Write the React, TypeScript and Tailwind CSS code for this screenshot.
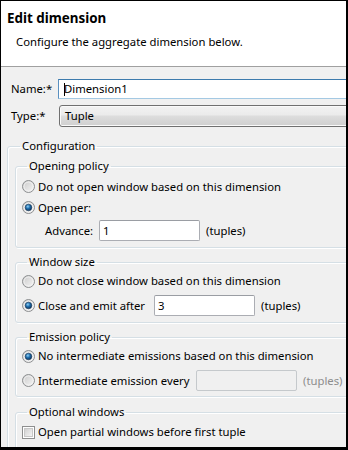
import React from "react";

function Radio({ checked }: { checked?: boolean }) {
  return (
    <svg width="13" height="13" viewBox="0 0 13 13" className="shrink-0">
      <defs>
        <linearGradient id="rbg" x1="0" y1="0" x2="1" y2="1">
          <stop offset="0" stopColor="#c9c9c9" />
          <stop offset="1" stopColor="#f7f7f7" />
        </linearGradient>
        <radialGradient id="rdot" cx="0.4" cy="0.35" r="0.7">
          <stop offset="0" stopColor="#8fd0f6" />
          <stop offset="0.45" stopColor="#1f6fae" />
          <stop offset="1" stopColor="#0b2d52" />
        </radialGradient>
      </defs>
      <circle cx="6.5" cy="6.5" r="6" fill="url(#rbg)" stroke="#8d8f91" />
      <circle cx="6.5" cy="6.5" r="4.5" fill="none" stroke="#f4f4f4" strokeWidth="0.8" />
      {checked && <circle cx="6.5" cy="6.5" r="3.3" fill="url(#rdot)" stroke="#1c3b5a" strokeWidth="0.6" />}
    </svg>
  );
}

function Checkbox() {
  return (
    <div className="w-[13px] h-[13px] shrink-0 border border-[#8e8f8f] bg-white p-[1px]">
      <div className="w-full h-full border border-[#c8c8c8] bg-gradient-to-br from-[#d2d2d2] to-[#f4f4f4]" />
    </div>
  );
}

function Group({ title, className, children }: { title: string; className?: string; children?: React.ReactNode }) {
  return (
    <fieldset
      className={`border border-[#d5dfe5] rounded-[3px] shadow-[inset_1px_1px_0_#ffffff,1px_1px_0_#ffffff] min-w-0 ${className ?? ""}`}
    >
      <legend className="ml-[5px] px-[2px] leading-[16px] text-black whitespace-nowrap">{title}</legend>
      {children}
    </fieldset>
  );
}

function TextBox({ value, className }: { value: string; className?: string }) {
  return (
    <div
      className={`h-[21px] w-[101px] shrink-0 border border-[#abadb3] border-t-[#9a9da3] bg-white rounded-[2px] flex items-center pl-[3px] leading-[16px] ${className ?? ""}`}
    >
      {value}
    </div>
  );
}

export default function App() {
  return (
    <div className="w-[348px] h-[450px] overflow-hidden border-l border-t border-r-2 border-b-[3px] border-black bg-[#f0f0f0] font-['Noto_Sans',sans-serif] text-[11.3px] text-black whitespace-nowrap">
      <div className="h-[66px] bg-white border-b border-[#a0a0a0] pt-[9px]">
        <div className="pl-[6px] font-bold text-[13.4px] leading-[16px]">Edit dimension</div>
        <div className="pl-[15px] mt-[8px] leading-[16px]">Configure the aggregate dimension below.</div>
      </div>
      <div className="w-[420px] pl-[6px] pt-[12px]">
        <div className="flex items-center h-[20px]">
          <div className="w-[51px] pl-[4px] leading-[16px]">Name:*</div>
          <div className="flex-1 h-[20px] border border-[#a4c9e3] border-t-[#3d7bad] border-l-[#5a90c0] bg-white flex items-center pl-[5px] leading-[16px]">
            <span className="inline-block w-px h-[13px] bg-black mr-[-1px]" />
            Dimension1
          </div>
        </div>
        <div className="flex items-center h-[22px] mt-[6px]">
          <div className="w-[52px] pl-[4px] leading-[16px]">Type:*</div>
          <div className="flex-1 h-[22px] border border-[#707070] rounded-[3px] flex items-center pl-[5px] leading-[16px] bg-[linear-gradient(to_bottom,#f2f2f2_0%,#ebebeb_45%,#dddddd_50%,#cfcfcf_100%)] shadow-[inset_0_0_0_1px_#fafafa]">
            Tuple
          </div>
        </div>

        <Group title="Configuration" className="mt-[11px] pl-[7px] pb-[10px]">
          <Group title="Opening policy" className="mt-[4px] pl-[6px] pb-[6px]">
            <div className="flex items-center gap-[3px] h-[21px] mt-[2px]">
              <Radio />
              <span className="leading-[16px]">Do not open window based on this dimension</span>
            </div>
            <div className="flex items-center gap-[3px] h-[21px]">
              <Radio checked />
              <span className="leading-[16px]">Open per:</span>
            </div>
            <div className="flex items-center h-[21px] mt-[2px] pl-[23px]">
              <span className="w-[54px] leading-[16px]">Advance:</span>
              <TextBox value="1" />
              <span className="ml-[6px] leading-[16px]">(tuples)</span>
            </div>
          </Group>

          <Group title="Window size" className="mt-[6px] pl-[6px] pb-[6px]">
            <div className="flex items-center gap-[3px] h-[20px] mt-[1px]">
              <Radio />
              <span className="leading-[16px]">Do not close window based on this dimension</span>
            </div>
            <div className="flex items-center h-[21px] mt-[4px]">
              <div className="flex items-center gap-[3px] w-[132px] shrink-0">
                <Radio checked />
                <span className="leading-[16px]">Close and emit after</span>
              </div>
              <TextBox value="3" />
              <span className="ml-[6px] leading-[16px]">(tuples)</span>
            </div>
          </Group>

          <Group title="Emission policy" className="mt-[6px] pl-[6px] pb-[5px]">
            <div className="flex items-center gap-[3px] h-[20px] mt-[1px]">
              <Radio checked />
              <span className="leading-[16px]">No intermediate emissions based on this dimension</span>
            </div>
            <div className="flex items-center h-[21px] mt-[4px]">
              <div className="flex items-center gap-[3px] w-[174px] shrink-0">
                <Radio />
                <span className="leading-[16px]">Intermediate emission every</span>
              </div>
              <div className="h-[21px] w-[101px] shrink-0 border border-[#c5c9cc] rounded-[2px] bg-[#f0f0f0]" />
              <span className="ml-[6px] leading-[16px] text-[#8d8d8d]">(tuples)</span>
            </div>
          </Group>

          <Group title="Optional windows" className="mt-[7px] pl-[6px] pb-[8px]">
            <div className="flex items-center gap-[3px] h-[20px] mt-[2px]">
              <Checkbox />
              <span className="leading-[16px]">Open partial windows before first tuple</span>
            </div>
          </Group>
        </Group>
      </div>
    </div>
  );
}
